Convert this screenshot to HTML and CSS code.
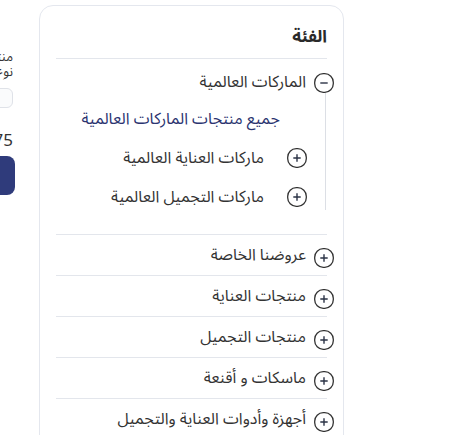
FILE: index.html
```html
<!DOCTYPE html>
<html lang="ar">
<head>
<meta charset="utf-8">
<link rel="stylesheet" href="styles.css">
</head>
<body>
<div class="page">
  <div class="product" dir="rtl">
    <p class="product-name">منتجات العناية بالبشرة<br>نوع المنتج الأصلي</p>
    <div class="qty"></div>
    <p class="price">175 ر.س</p>
    <div class="buy"></div>
  </div>
  <aside class="card" dir="rtl">
    <h2 class="title">الفئة</h2>
    <div class="expanded">
      <div class="row head">
        <svg class="ico" viewBox="0 0 20 20"><rect x="0.7" y="0.7" width="18.6" height="18.6" rx="8.5"/><path d="M6.3 10h7.4"/></svg>
        <span>الماركات العالمية</span>
      </div>
      <div class="children">
        <div class="child link">جميع منتجات الماركات العالمية</div>
        <div class="child">
          <svg class="ico" viewBox="0 0 20 20"><rect x="0.7" y="0.7" width="18.6" height="18.6" rx="8.5"/><path d="M6.3 10h7.4M10 6.3v7.4"/></svg>
          <span>ماركات العناية العالمية</span>
        </div>
        <div class="child">
          <svg class="ico" viewBox="0 0 20 20"><rect x="0.7" y="0.7" width="18.6" height="18.6" rx="8.5"/><path d="M6.3 10h7.4M10 6.3v7.4"/></svg>
          <span>ماركات التجميل العالمية</span>
        </div>
      </div>
    </div>
    <ul class="list">
      <li class="row item"><svg class="ico" viewBox="0 0 20 20"><rect x="0.7" y="0.7" width="18.6" height="18.6" rx="8.5"/><path d="M6.3 10h7.4M10 6.3v7.4"/></svg><span>عروضنا الخاصة</span></li>
      <li class="row item"><svg class="ico" viewBox="0 0 20 20"><rect x="0.7" y="0.7" width="18.6" height="18.6" rx="8.5"/><path d="M6.3 10h7.4M10 6.3v7.4"/></svg><span>منتجات العناية</span></li>
      <li class="row item"><svg class="ico" viewBox="0 0 20 20"><rect x="0.7" y="0.7" width="18.6" height="18.6" rx="8.5"/><path d="M6.3 10h7.4M10 6.3v7.4"/></svg><span>منتجات التجميل</span></li>
      <li class="row item"><svg class="ico" viewBox="0 0 20 20"><rect x="0.7" y="0.7" width="18.6" height="18.6" rx="8.5"/><path d="M6.3 10h7.4M10 6.3v7.4"/></svg><span>ماسكات و أقنعة</span></li>
      <li class="row item"><svg class="ico" viewBox="0 0 20 20"><rect x="0.7" y="0.7" width="18.6" height="18.6" rx="8.5"/><path d="M6.3 10h7.4M10 6.3v7.4"/></svg><span>أجهزة وأدوات العناية والتجميل</span></li>
    </ul>
  </aside>
</div>
</body>
</html>
```

FILE: styles.css
```css
* { box-sizing: border-box; }
html, body { margin: 0; padding: 0; background: #fff; overflow: hidden; }
body {
  font-family: "Noto Sans Arabic", "Noto Sans", "DejaVu Sans", sans-serif;
  color: #333;
  width: 466px;
  height: 435px;
}
.page {
  display: flex;
  direction: ltr;
  gap: 25px;
  align-items: flex-start;
}
.product {
  width: 200px;
  margin-left: -186px;
  flex: none;
  padding-top: 50px;
  padding-right: 1px;
}
.product-name {
  margin: 0;
  font-size: 13px;
  line-height: 15px;
  white-space: nowrap;
  overflow: hidden;
}
.qty {
  margin-top: 8px;
  height: 20px;
  border: 1px solid #dfe2e8;
  border-radius: 6px;
  background: #fafbfc;
}
.price {
  margin: 22px 0 0;
  font-size: 17px;
  line-height: 20px;
  font-family: "Noto Sans", "DejaVu Sans", sans-serif;
  white-space: nowrap;
}
.buy {
  margin-top: 6px;
  margin-right: -2px;
  height: 39px;
  background: #2f3b7b;
  border-radius: 8px;
}
.card {
  flex: none;
  width: 305px;
  height: 470px;
  margin-top: 5px;
  border: 1px solid #e4e7ee;
  border-radius: 14px;
  padding: 0 9px 0 16px;
}
.title {
  margin: 0 7px 0 0;
  font-size: 17px;
  font-weight: 700;
  line-height: 22px;
  padding: 20px 0 10px;
  border-bottom: 1px solid #e3e6ec;
  color: #2a2a2a;
}
.ico {
  width: 20px;
  height: 20px;
  flex: none;
  fill: none;
  stroke: #333;
  stroke-width: 1.3;
}
.ico path { stroke: #2b3346; stroke-width: 1.4; }
.row {
  display: flex;
  align-items: center;
  gap: 8px;
  font-size: 16px;
}
.expanded {
  padding-top: 14px;
}
.head { height: 20px; }
.head span { margin-top: -3px; }
.children {
  margin: 0 8px 24px 0;
  padding: 13px 18px 0 0;
  border-right: 1px solid #dcdfe5;
  display: flex;
  flex-direction: column;
  gap: 13px;
}
.child {
  height: 26px;
  display: flex;
  align-items: center;
  gap: 23px;
  font-size: 16px;
}
.child.link {
  color: #2b3470;
  padding-right: 27px;
}
.list {
  list-style: none;
  margin: 0;
  padding: 0;
}
.item {
  height: 41px;
  border-top: 1px solid #e3e6ec;
  margin-right: 7px;
}
.item .ico { margin-right: -7px; margin-top: 6px; }
```
